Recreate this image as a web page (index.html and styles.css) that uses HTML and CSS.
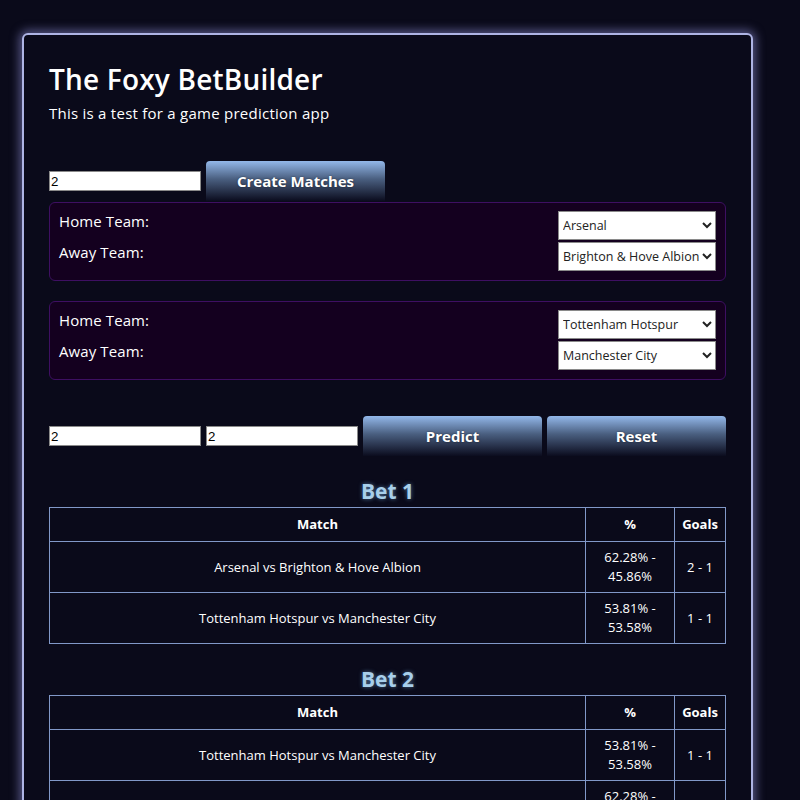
FILE: index.html
```html
<!DOCTYPE html>
<html lang="en">
<head>
<meta charset="utf-8">
<title>The Foxy BetBuilder</title>
<link rel="stylesheet" href="styles.css">
</head>
<body>
<main class="app">
  <h1 class="title">The Foxy BetBuilder</h1>
  <p class="subtitle">This is a test for a game prediction app</p>

  <div class="controls controls-top">
    <input class="num" type="text" value="2">
    <button class="btn">Create Matches</button>
  </div>

  <section class="match">
    <div class="match-row">
      <label class="match-label">Home Team:</label>
      <select class="team"><option>Arsenal</option></select>
    </div>
    <div class="match-row">
      <label class="match-label">Away Team:</label>
      <select class="team"><option>Brighton &amp; Hove Albion</option></select>
    </div>
  </section>

  <section class="match">
    <div class="match-row">
      <label class="match-label">Home Team:</label>
      <select class="team"><option>Tottenham Hotspur</option></select>
    </div>
    <div class="match-row">
      <label class="match-label">Away Team:</label>
      <select class="team"><option>Manchester City</option></select>
    </div>
  </section>

  <div class="controls controls-predict">
    <input class="num" type="text" value="2">
    <input class="num" type="text" value="2">
    <button class="btn">Predict</button>
    <button class="btn">Reset</button>
  </div>

  <h2 class="bet-title">Bet 1</h2>
  <table class="bet">
    <colgroup><col class="c-match"><col class="c-pct"><col class="c-goals"></colgroup>
    <thead><tr><th>Match</th><th>%</th><th>Goals</th></tr></thead>
    <tbody>
      <tr><td>Arsenal vs Brighton &amp; Hove Albion</td><td>62.28% - 45.86%</td><td>2 - 1</td></tr>
      <tr><td>Tottenham Hotspur vs Manchester City</td><td>53.81% - 53.58%</td><td>1 - 1</td></tr>
    </tbody>
  </table>

  <h2 class="bet-title">Bet 2</h2>
  <table class="bet">
    <colgroup><col class="c-match"><col class="c-pct"><col class="c-goals"></colgroup>
    <thead><tr><th>Match</th><th>%</th><th>Goals</th></tr></thead>
    <tbody>
      <tr><td>Tottenham Hotspur vs Manchester City</td><td>53.81% - 53.58%</td><td>1 - 1</td></tr>
      <tr><td>Arsenal vs Brighton &amp; Hove Albion</td><td>62.28% - 45.86%</td><td>2 - 1</td></tr>
    </tbody>
  </table>
</main>
</body>
</html>
```

FILE: styles.css
```css
* { box-sizing: border-box; }

html, body {
  background: #0a0a1a;
}

body {
  margin: 0;
  padding: 33px 0 40px 22px;
  font-family: "Open Sans", "DejaVu Sans", sans-serif;
  color: #ffffff;
}

.app {
  width: 731px;
  border: 2px solid #aeb4e4;
  border-radius: 6px;
  background: #0a0a1a;
  box-shadow: 0 0 10px 3px rgba(140, 140, 210, 0.55);
  padding: 26px 25px 30px 25px;
}

.title {
  margin: 0;
  font-size: 28px;
  line-height: 36px;
  font-weight: 600;
  letter-spacing: 0.2px;
}

.subtitle {
  margin: 6px 0 0;
  font-size: 15px;
  line-height: 20px;
  letter-spacing: 0.25px;
}

.controls {
  display: flex;
  align-items: center;
  gap: 5px;
}

.controls-top {
  margin-top: 38px;
}

.controls-predict {
  margin-top: 36px;
}

.num {
  width: 152px;
  height: 20px;
  margin: 0;
  padding: 0 1px;
  border: 1px solid #8a8a8a;
  border-radius: 0;
  background: #ffffff;
  color: #000000;
  font-family: "Liberation Sans", Arial, sans-serif;
  font-size: 13.3px;
}

.btn {
  width: 179px;
  height: 40px;
  margin: 0;
  padding: 0;
  border: none;
  border-radius: 4px 4px 0 0;
  background: linear-gradient(to bottom, #93b8ea 0%, #4a5f80 45%, #0b0c1e 100%);
  color: #ffffff;
  font-family: "Open Sans", "DejaVu Sans", sans-serif;
  font-size: 15px;
  font-weight: 700;
  text-shadow: 0 0 2px rgba(0, 0, 0, 0.5);
}

.match {
  margin-top: 1px;
  border: 1px solid #3e0f62;
  border-radius: 6px;
  background: #14001f;
  padding: 8px 9px 9px 9px;
  display: flex;
  flex-direction: column;
  gap: 2px;
}

.match + .match {
  margin-top: 20px;
}

.match-row {
  display: flex;
  justify-content: space-between;
  align-items: flex-start;
}

.match-label {
  font-size: 15px;
  line-height: 20px;
  letter-spacing: 0.1px;
}

.team {
  width: 158px;
  height: 29px;
  margin: 0;
  border: 1px solid #8a8a8a;
  border-radius: 0;
  background-color: #ffffff;
  color: #222222;
  font-family: "Open Sans", "DejaVu Sans", sans-serif;
  font-size: 12.5px;
  padding: 0;
}

.bet-title {
  margin: 20px 0 0;
  text-align: center;
  font-size: 21px;
  line-height: 31px;
  font-weight: 700;
  color: #a8cfea;
  text-shadow: 0 0 4px rgba(120, 180, 230, 0.6);
}

.bet {
  width: 100%;
  border-collapse: collapse;
  table-layout: fixed;
  font-size: 13px;
}

.c-match { width: 536px; }
.c-pct { width: 89px; }
.c-goals { width: 51px; }

.bet th,
.bet td {
  border: 1px solid #8198c8;
  text-align: center;
  vertical-align: middle;
  line-height: 19px;
}

.bet th {
  padding: 7px 4px;
  font-weight: 700;
}

.bet td {
  padding: 6px 6px;
}
```
